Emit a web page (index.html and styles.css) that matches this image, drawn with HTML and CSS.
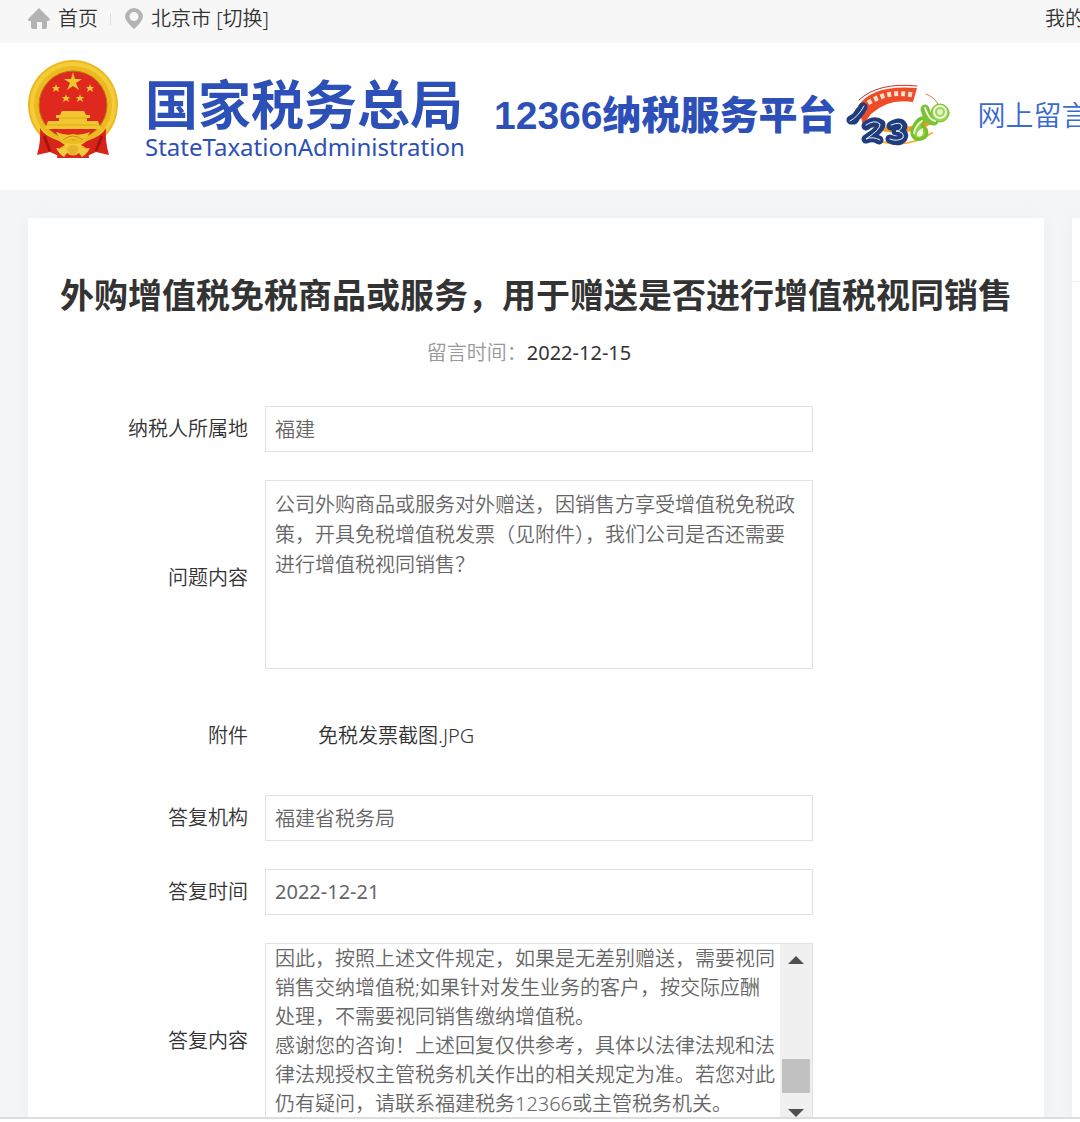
FILE: index.html
```html
<!DOCTYPE html>
<html lang="zh-CN">
<head>
    <meta charset="utf-8" />
    <title>12366纳税服务平台</title>
    <link rel="stylesheet" href="styles.css">
</head>
<body>
    <div class="page">
        <div class="topbar">
            <a class="toplink" href="#">
                <svg class="icon-home" viewBox="0 0 22 21" width="22" height="21"><path d="M11 0 L22 11 Q22 13 20 13 H19 V19 Q19 21 17 21 H14 V14 H9 V21 H5 Q3 21 3 19 V13 H1 Q0 13 0 11 Z" fill="#b3b3b3"/></svg>
                首页
            </a>
            <span class="sep"></span>
            <a class="toplink" href="#">
                <svg class="icon-pin" viewBox="0 0 18 21" width="18" height="21"><path fill-rule="evenodd" d="M9 0 A9 9 0 0 1 18 9 Q17 14 9 21 Q1 14 0 9 A9 9 0 0 1 9 0 Z M9 4 A4.500 4.500 0 1 0 9 13 A4.500 4.500 0 1 0 9 4 Z" fill="#b3b3b3"/></svg>
                北京市 [切换]
            </a>
            <nav class="mine"><a class="toplink" href="#">我的</a></nav>
        </div>

        <header class="header">
            <svg class="emblem" viewBox="0 0 92 98" width="92" height="98">
                <path d="M32 80 H60 L62 98 H30 Z" fill="#d9281c"/>
                <circle cx="46" cy="45" r="45" fill="#ecb920"/>
                <circle cx="46" cy="45" r="41" fill="none" stroke="#f3cc38" stroke-width="4"/>
                <circle cx="46" cy="45" r="34" fill="#df291e" stroke="#b87a10"/>
                <g fill="#f1c62f">
                    <path d="M46 12 L48 19 H55 L49 23 L52 30 L46 26 L40 30 L43 23 L37 19 H44 Z"/>
                    <path d="M29 24 L30 27 H33 L31 29 L32 32 L29 30 L26 32 L27 29 L25 27 H28 Z"/>
                    <path d="M63 24 L64 27 H67 L65 29 L66 32 L63 30 L60 32 L61 29 L59 27 H62 Z"/>
                    <path d="M39 34 L40 37 H43 L41 39 L42 42 L39 40 L36 42 L37 39 L35 37 H38 Z"/>
                    <path d="M53 34 L54 37 H57 L55 39 L56 42 L53 40 L50 42 L51 39 L49 37 H52 Z"/>
                    <path d="M35 51 H57 L59 55 H63 V58 H60 V61 H71 L74 69 H18 L21 61 H32 V58 H29 V55 H33 Z"/>
                </g>
                <path d="M32 58 H60 M20 65 H72" stroke="#e0a921"/>
                <path d="M13 68 Q17 76 32 81 L38 85 L31 89 L34 97 L23 92 L10 95 Q14 82 13 68 Z" fill="#d9241b"/>
                <path d="M79 68 Q75 76 60 81 L54 85 L61 89 L58 97 L69 92 L82 95 Q78 82 79 68 Z" fill="#d9241b"/>
                <path d="M17 76 L23 91 M75 76 L69 91" stroke="#a3150f" stroke-width="3"/>
                <path d="M29 72 Q39 76 46 74 Q53 76 63 72 L57 82 Q46 76 35 82 Z" fill="#f0c22c"/>
                <path d="M36 80 Q46 72 56 80" fill="none" stroke="#c98a15"/>
                <path d="M29 88 Q36 89 40 87 Q46 80 52 87 Q56 89 63 88 Q60 94 55 97 L52 93 Q46 98 40 93 L37 97 Q32 94 29 88 Z" fill="#f3cc3d"/>
                <path d="M40 88 Q46 82 52 88 Q51 94 46 95 Q41 94 40 88 Z" fill="#e6b32b"/>
            </svg>
            <div class="brand">
                <div class="brand-cn">国家税务总局</div>
                <div class="brand-en">StateTaxationAdministration</div>
            </div>
            <div class="platform">12366纳税服务平台</div>
            <svg class="logo" viewBox="0 0 104 64" width="104" height="64" fill="none" stroke-linecap="round" stroke-linejoin="round">
                <path d="M12 23 Q27 1 71 5 L67 19 Q42 15 25 31 L17 42 Z" fill="#ee4b29"/>
                <path d="M13 17 Q32 -1 71 3" stroke="#cf2f28"/>
                <path d="M22 20 Q42 7 67 12" stroke="#ffe0cd" stroke-width="5" stroke-dasharray="4 3" stroke-linecap="butt"/>
                <path d="M21 40 Q42 50 63 46 Q86 44 91 27" stroke="#f59c22" stroke-width="5"/>
                <path d="M30 57 Q60 67 86 50" stroke="#f8b13d" stroke-width="2"/>
                <path d="M80 11 Q88 14 92 21" stroke="#ee7635"/>
                <g stroke="#1f3d7c" stroke-width="9">
                    <path d="M5 37 Q12 34 17 24 M8 37 L14 28"/>
                    <path d="M20 43 Q28 36 35 41 Q36 46 20 56 Q27 53 33 57"/>
                    <path d="M45 43 Q54 37 57 43 Q56 48 50 48 Q60 49 57 55 Q52 60 44 56"/>
                </g>
                <g stroke="#edf4fb" stroke-width="1">
                    <path d="M4 38 Q12 34 18 23 M20 42 Q29 36 34 41 Q35 46 20 56 Q27 53 34 57 M45 42 Q55 38 56 43 Q55 48 50 48 Q59 49 57 55 Q51 59 44 56"/>
                </g>
                <path d="M79 36 Q76 33 71 38 Q65 46 66 51 Q68 58 75 56 Q83 54 80 46 L76 43 Z" fill="#92d145" stroke="#78bf2e" stroke-width="3"/>
                <path d="M77 45 Q70 48 71 53 Q76 55 77 50 Z" fill="#f3fae9"/>
                <path d="M76 38 Q69 43 68 50" stroke="#eaf8d6" stroke-width="2"/>
                <path d="M79 26 Q82 38 88 38" stroke="#7ac332" stroke-width="9"/>
                <circle cx="94" cy="30" r="9" fill="#99d553" stroke="#78bf2e"/>
                <path d="M79 25 Q83 37 89 38" stroke="#effae2" stroke-width="2"/>
                <circle cx="94" cy="29" r="6" stroke="#effadd" stroke-width="2"/>
                <circle cx="94" cy="29" r="3" fill="#dff1c9"/>
            </svg>
            <a class="channel" href="#">网上留言</a>
        </header>

        <div class="content">
            <main class="card">
                <h1 class="title">外购增值税免税商品或服务，用于赠送是否进行增值税视同销售</h1>
                <p class="date"><span class="date-label">留言时间：</span><time>2022-12-15</time></p>

                <form class="form">
                    <div class="row">
                        <label class="label" for="area">纳税人所属地</label>
                        <input class="field" id="area" type="text" value="福建" readonly>
                    </div>
                    <div class="row tall">
                        <label class="label" for="question">问题内容</label>
                        <textarea class="field question" id="question" readonly>公司外购商品或服务对外赠送，因销售方享受增值税免税政策，开具免税增值税发票（见附件），我们公司是否还需要进行增值税视同销售？</textarea>
                    </div>
                    <div class="row file-row">
                        <span class="label">附件</span>
                        <a class="file" href="#">免税发票截图.JPG</a>
                    </div>
                    <div class="row">
                        <label class="label" for="org">答复机构</label>
                        <input class="field" id="org" type="text" value="福建省税务局" readonly>
                    </div>
                    <div class="row">
                        <label class="label" for="replydate">答复时间</label>
                        <input class="field field-date" id="replydate" type="text" value="2022-12-21" readonly>
                    </div>
                    <div class="row tall">
                        <label class="label" for="reply">答复内容</label>
                        <div class="reply-box">
                            <textarea class="reply" id="reply" readonly>因此，按照上述文件规定，如果是无差别赠送，需要视同销售交纳增值税;如果针对发生业务的客户，按交际应酬处理，不需要视同销售缴纳增值税。
感谢您的咨询！上述回复仅供参考，具体以法律法规和法律法规授权主管税务机关作出的相关规定为准。若您对此仍有疑问，请联系福建税务12366或主管税务机关。</textarea>
                            <div class="scroll">
                                <svg viewBox="0 0 16 8" width="16" height="8"><path d="M0 8 L8 0 L16 8 Z" fill="#505050"/></svg>
                                <div class="thumb"></div>
                                <svg viewBox="0 0 16 8" width="16" height="8"><path d="M0 0 L8 8 L16 0 Z" fill="#505050"/></svg>
                            </div>
                        </div>
                    </div>
                </form>
            </main>
            <aside class="side"><div class="side-head"></div></aside>
        </div>
    </div>
    <div class="bottom"></div>
</body>
</html>
```

FILE: styles.css
```css
* {
    box-sizing: border-box;
}

body {
    margin: 0;
    height: 100vh;
    display: flex;
    flex-direction: column;
    overflow: hidden;
    background: #fff;
    color: #333;
    font: 350 20px/30px "Noto Sans", "Noto Sans CJK SC", sans-serif;
}

a {
    color: inherit;
    text-decoration: none;
}

.page {
    flex: 1;
    min-height: 0;
    min-width: 1400px;
    overflow: hidden;
    background: #f4f5f7;
}

/* top bar */
.topbar {
    display: flex;
    align-items: center;
    height: 43px;
    padding: 0 28px 6px;
    background: #f7f7f7;
}

.toplink {
    display: flex;
    align-items: center;
    gap: 8px;
}

.sep {
    width: 1px;
    height: 12px;
    margin: 0 14px 0 12px;
    background: #ddd;
}

.mine {
    width: 327px;
    margin-left: auto;
}

/* header */
.header {
    display: flex;
    align-items: center;
    height: 147px;
    padding: 0 27px 15px;
    background: #fff;
    white-space: nowrap;
}

.emblem,
.logo {
    flex: none;
}

.brand {
    margin: 20px 0 0 26px;
    width: 320px;
    color: #2c50b8;
}

.brand-cn {
    font-size: 53px;
    font-weight: 700;
    line-height: 56px;
}

.brand-en {
    font-size: 24px;
    font-weight: 400;
    line-height: 28px;
}

.platform {
    margin: 14px 10px 0 29px;
    color: #2c50b8;
    font: 900 39px/48px "Liberation Sans", "Noto Sans CJK SC", sans-serif;
}

.logo {
    margin-top: 12px;
}

.channel {
    margin: 12px 0 0 27px;
    color: #3a6bd0;
    font-size: 28px;
    line-height: 40px;
}

/* content */
.content {
    display: flex;
    gap: 28px;
    padding: 28px;
}

.card,
.side {
    background: #fff;
    box-shadow: 0 0 20px rgba(0, 0, 0, 0.03);
}

.card {
    flex: 1;
    padding: 50px 0 40px;
}

.side {
    width: 300px;
}

.side-head {
    height: 64px;
    border-bottom: 1px solid #eee;
}

.title {
    margin: 0;
    font-size: 34px;
    font-weight: 700;
    line-height: 54px;
    text-align: center;
}

.date {
    margin: 16px 0 38px;
    padding-right: 14px;
    text-align: center;
}

.date time {
    font-weight: 400;
}

.date-label {
    color: #999;
}

/* form */
.form {
    display: flex;
    flex-direction: column;
    gap: 28px;
}

.row {
    display: grid;
    grid-template-columns: 220px minmax(0, 548px);
    gap: 17px;
    align-items: center;
}

.label {
    text-align: right;
}

.tall .label {
    padding-top: 6px;
}

.field {
    width: 100%;
    height: 46px;
    padding: 0 9px 2px;
    border: 1px solid #e2e2e2;
    border-radius: 0;
    background: #fff;
    color: #666;
    font: inherit;
    outline: none;
}

.field-date {
    font-weight: 400;
}

.question {
    display: block;
    height: 189px;
    padding: 9px;
    resize: none;
    overflow: hidden;
}

.file-row {
    height: 70px;
    padding-top: 8px;
}

.file {
    padding-left: 53px;
}

.reply-box {
    display: flex;
    height: 189px;
    border: 1px solid #e2e2e2;
}

.reply {
    flex: 1;
    min-width: 0;
    padding: 0 4px 0 9px;
    border: 0;
    color: #666;
    font: inherit;
    line-height: 29px;
    resize: none;
    overflow: hidden;
    outline: none;
}

.scroll {
    display: flex;
    flex-direction: column;
    align-items: center;
    width: 32px;
    padding: 12px 0 14px;
    background: #f0f0f0;
}

.thumb {
    width: 28px;
    height: 34px;
    margin: auto 0 16px;
    background: #c1c1c1;
}

/* bottom edge */
.bottom {
    height: 5px;
    border-top: 2px solid #ddd;
    background: #fff;
}
```
